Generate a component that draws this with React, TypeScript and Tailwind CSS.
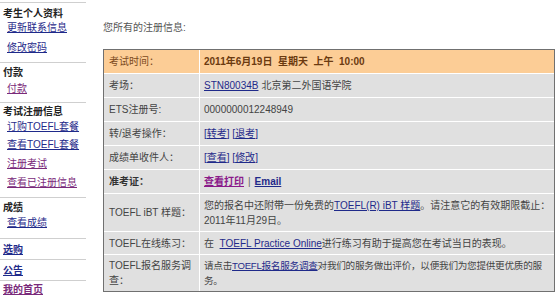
import React from "react";

const font = "font-['Liberation_Sans','Noto_Sans_CJK_SC',sans-serif]";

export default function App() {
  return (
    <div className={`flex w-[558px] h-[297px] bg-white text-[10px] text-[#444] ${font}`}>
      {/* Sidebar */}
      <aside className="w-[86px] flex flex-col shrink-0">
        <div className="mt-[2px] h-px bg-[#cfcfcf]" />
        <div className="mt-[4px] pl-[3px] leading-[14px] font-bold text-[#222]">考生个人资料</div>
        <a className="pl-[7px] leading-[14px] text-[#1f2a8a] underline">更新联系信息</a>
        <a className="mt-[6px] pl-[7px] leading-[14px] text-[#1f2a8a] underline">修改密码</a>
        <div className="mt-[7px] h-px bg-[#cfcfcf]" />
        <div className="mt-[3px] pl-[3px] leading-[14px] font-bold text-[#222]">付款</div>
        <a className="mt-[2px] pl-[7px] leading-[14px] text-[#7a2a7a] underline">付款</a>
        <div className="mt-[6px] h-px bg-[#cfcfcf]" />
        <div className="mt-[2px] pl-[3px] leading-[14px] font-bold text-[#222]">考试注册信息</div>
        <a className="mt-[1px] pl-[7px] leading-[14px] text-[#1f2a8a] underline">订购TOEFL套餐</a>
        <a className="mt-[4px] pl-[7px] leading-[14px] text-[#1f2a8a] underline">查看TOEFL套餐</a>
        <a className="mt-[5px] pl-[7px] leading-[14px] text-[#7a2a7a] underline">注册考试</a>
        <a className="mt-[5px] pl-[7px] leading-[14px] text-[#7a2a7a] underline">查看已注册信息</a>
        <div className="mt-[7px] h-px bg-[#cfcfcf]" />
        <div className="mt-[3px] pl-[3px] leading-[14px] font-bold text-[#222]">成绩</div>
        <a className="mt-[1px] pl-[7px] leading-[14px] text-[#1f2a8a] underline">查看成绩</a>
        <div className="mt-[8px] h-px bg-[#cfcfcf]" />
        <a className="mt-[4px] pl-[3px] leading-[14px] font-bold text-[#1f2a8a] underline">选购</a>
        <div className="mt-[2px] h-px bg-[#cfcfcf]" />
        <a className="mt-[4px] pl-[3px] leading-[14px] font-bold text-[#1f2a8a] underline">公告</a>
        <div className="mt-[2px] h-px bg-[#cfcfcf]" />
        <a className="mt-[2px] pl-[3px] leading-[14px] font-bold text-[#7a2a7a] underline">我的首页</a>
      </aside>

      {/* Main */}
      <main className="flex-1 pl-[17px] pr-[3px]">
        <div className="mt-[21px] leading-[14px] text-[#555]">您所有的注册信息:</div>
        <div className="mt-[14px] border border-[#707070] bg-white grid grid-cols-[95px_1fr] gap-px">
          {/* Row 1 */}
          <div className="h-[23px] flex items-center pl-[5px] bg-[#fccd96] text-[#7b4a1e]">考试时间：</div>
          <div className="h-[23px] flex items-center pl-[4px] bg-[#fccd96] text-[#6b3a10] font-bold whitespace-pre">
            2011年6月19日  星期天  上午  10:00
          </div>

          <div className="h-[23px] flex items-center pl-[5px] bg-[#e0e0e0]">考场：</div>
          <div className="h-[23px] flex items-center pl-[4px] bg-[#e0e0e0]">
            <a className="text-[#1f2a8a] underline">STN80034B</a>
            <span className="ml-[3px]">北京第二外国语学院</span>
          </div>

          <div className="h-[23px] flex items-center pl-[5px] bg-[#e0e0e0]">ETS注册号:</div>
          <div className="h-[23px] flex items-center pl-[4px] bg-[#e0e0e0]">0000000012248949</div>

          <div className="h-[23px] flex items-center pl-[5px] bg-[#e0e0e0]">转/退考操作：</div>
          <div className="h-[23px] flex items-center pl-[4px] bg-[#e0e0e0] text-[#1f2a8a]">
            [<a className="underline">转考</a>]&nbsp;[<a className="underline">退考</a>]
          </div>

          <div className="h-[23px] flex items-center pl-[5px] bg-[#e0e0e0]">成绩单收件人：</div>
          <div className="h-[23px] flex items-center pl-[4px] bg-[#e0e0e0] text-[#1f2a8a]">
            [<a className="underline">查看</a>]&nbsp;[<a className="underline">修改</a>]
          </div>

          <div className="h-[23px] flex items-center pl-[5px] bg-[#e0e0e0] font-bold text-[#333]">准考证：</div>
          <div className="h-[23px] flex items-center pl-[4px] bg-[#e0e0e0]">
            <a className="font-bold text-[#8a1a8a] underline">查看打印</a>
            <span className="mx-[4px] text-[#666]">|</span>
            <a className="font-bold text-[#1f2a8a] underline">Email</a>
          </div>

          <div className="h-[37px] flex items-center pl-[5px] bg-[#e0e0e0] whitespace-nowrap">TOEFL iBT 样题：</div>
          <div className="h-[37px] flex items-center pl-[4px] bg-[#e0e0e0] leading-[15px] whitespace-nowrap">
            <p>
              您的报名中还附带一份免费的<a className="text-[#1f2a8a] underline">TOEFL(R) iBT 样题</a>。请注意它的有效期限截止：
              <br />
              2011年11月29日。
            </p>
          </div>

          <div className="h-[22px] flex items-center pl-[5px] bg-[#e0e0e0] whitespace-nowrap">TOEFL在线练习：</div>
          <div className="h-[22px] flex items-center pl-[4px] bg-[#e0e0e0] whitespace-pre">
            在  <a className="text-[#1f2a8a] underline">TOEFL Practice Online</a>进行练习有助于提高您在考试当日的表现。
          </div>

          <div className="h-[36px] flex items-center pl-[5px] bg-[#e0e0e0] leading-[15px] whitespace-nowrap">
            <p>
              TOEFL报名服务调
              <br />
              查：
            </p>
          </div>
          <div className="h-[36px] flex items-center pl-[4px] bg-[#e0e0e0] leading-[15px] whitespace-nowrap text-[9.6px] tracking-[-0.25px]">
            <p>
              请点击<a className="text-[#1f2a8a] underline">TOEFL报名服务调查</a>对我们的服务做出评价，以便我们为您提供更优质的服
              <br />
              务。
            </p>
          </div>
        </div>
      </main>
    </div>
  );
}
